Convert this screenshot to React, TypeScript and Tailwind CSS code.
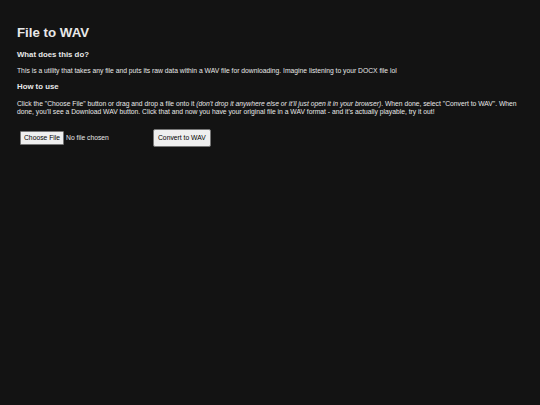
export default function App() {
  return (
    <div className="min-h-[405px] w-full bg-[#131313] text-[#e8e8e8] px-[17px] pt-[25px]" style={{ fontFamily: '"Liberation Sans", Arial, sans-serif' }}>
      <h1 className="text-[13.3px] font-bold leading-[16px]">File to WAV</h1>
      <h2 className="mt-[9px] text-[7.8px] font-bold leading-[10px]">What does this do?</h2>
      <p className="mt-[7px] text-[6.75px] leading-[8px]">This is a utility that takes any file and puts its raw data within a WAV file for downloading. Imagine listening to your DOCX file lol</p>
      <h2 className="mt-[7px] text-[7.8px] font-bold leading-[10px]">How to use</h2>
      <p className="mt-[8px] text-[6.75px] leading-[8px]">
        Click the "Choose File" button or drag and drop a file onto it <i>(don't drop it anywhere else or it'll just open it in your browser)</i>. When done, select "Convert to WAV". When done, you'll see a Download WAV button. Click that and now you have your original file in a WAV format - and it's actually playable, try it out!
      </p>
      <div className="mt-[13px] flex items-center pl-[3px]">
        <div className="flex items-center w-[133px]">
          <span className="bg-[#efefef] text-black text-[6.75px] leading-[8px] px-[3px] py-[2px] border border-[#767676] rounded-[1px]">Choose File</span>
          <span className="ml-[2px] text-[6.75px]">No file chosen</span>
        </div>
        <span className="bg-[#efefef] text-black text-[6.75px] leading-[8px] px-[4px] py-[4px] border border-[#767676] rounded-[2px]">Convert to WAV</span>
      </div>
    </div>
  );
}
